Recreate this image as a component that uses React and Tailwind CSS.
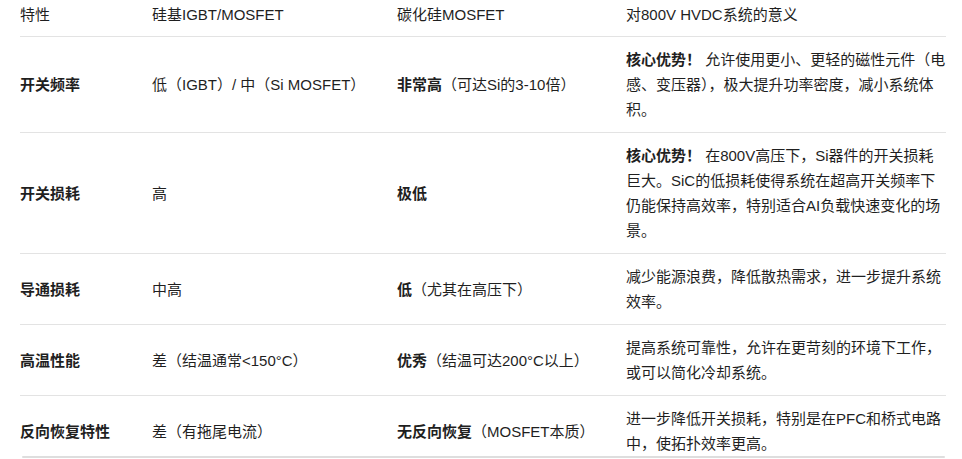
const rows = [
    {
        name: "开关频率",
        si: "低（IGBT）/ 中（Si MOSFET）",
        sicStrong: "非常高",
        sic: "（可达Si的3-10倍）",
        meanStrong: "核心优势！",
        mean: " 允许使用更小、更轻的磁性元件（电感、变压器），极大提升功率密度，减小系统体积。",
    },
    {
        name: "开关损耗",
        si: "高",
        sicStrong: "极低",
        sic: "",
        meanStrong: "核心优势！",
        mean: " 在800V高压下，Si器件的开关损耗巨大。SiC的低损耗使得系统在超高开关频率下仍能保持高效率，特别适合AI负载快速变化的场景。",
    },
    {
        name: "导通损耗",
        si: "中高",
        sicStrong: "低",
        sic: "（尤其在高压下）",
        mean: "减少能源浪费，降低散热需求，进一步提升系统效率。",
    },
    {
        name: "高温性能",
        si: "差（结温通常<150°C）",
        sicStrong: "优秀",
        sic: "（结温可达200°C以上）",
        mean: "提高系统可靠性，允许在更苛刻的环境下工作，或可以简化冷却系统。",
    },
    {
        name: "反向恢复特性",
        si: "差（有拖尾电流）",
        sicStrong: "无反向恢复",
        sic: "（MOSFET本质）",
        mean: "进一步降低开关损耗，特别是在PFC和桥式电路中，使拓扑效率更高。",
    },
];

const App = () => {
    return (
        <div className="relative h-[459px] overflow-hidden bg-white font-['Liberation_Sans','Noto_Sans_CJK_SC',sans-serif] text-[15px] leading-[25px] text-[#1f1f1f]">
            <table className="ml-[20px] w-[926px] table-fixed border-collapse text-left">
                <colgroup>
                    <col className="w-[132px]" />
                    <col className="w-[245px]" />
                    <col className="w-[229px]" />
                    <col className="w-[320px]" />
                </colgroup>
                <thead>
                    <tr className="border-b border-[#e3e3e3]">
                        <th className="pt-[2px] pb-[9px] font-normal">特性</th>
                        <th className="pt-[2px] pb-[9px] font-normal">硅基IGBT/MOSFET</th>
                        <th className="pt-[2px] pb-[9px] font-normal">碳化硅MOSFET</th>
                        <th className="pt-[2px] pb-[9px] font-normal">对800V HVDC系统的意义</th>
                    </tr>
                </thead>
                <tbody>
                    {rows.map((r) => (
                        <tr key={r.name} className="border-b border-[#e3e3e3] align-middle">
                            <td className="py-[10px] font-bold">{r.name}</td>
                            <td className="py-[10px]">{r.si}</td>
                            <td className="py-[10px]">
                                <span className="font-bold">{r.sicStrong}</span>
                                {r.sic}
                            </td>
                            <td className="py-[10px]">
                                {r.meanStrong && <span className="font-bold">{r.meanStrong}</span>}
                                {r.mean}
                            </td>
                        </tr>
                    ))}
                </tbody>
            </table>
            {/* scrollbar strip along the bottom */}
            <div className="absolute bottom-[1px] left-[22px] h-[2px] w-[923px] rounded-full bg-[#dedede]" />
        </div>
    );
};

export default App;
